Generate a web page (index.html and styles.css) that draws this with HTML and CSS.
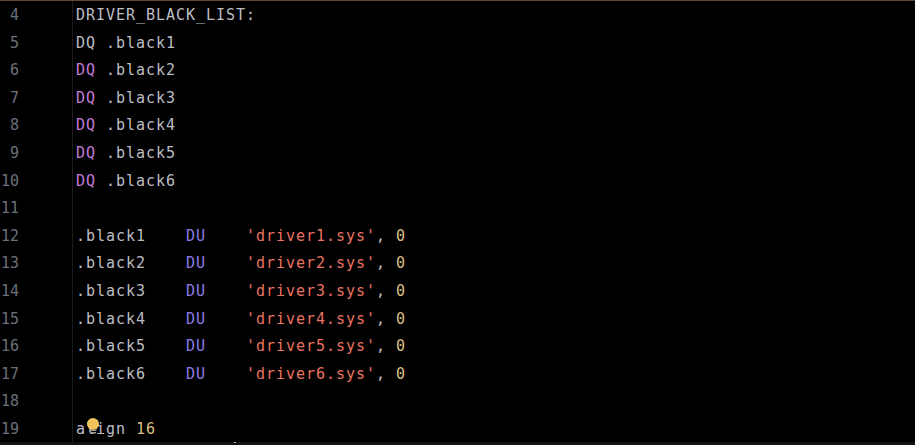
FILE: index.html
```html
<!DOCTYPE html>
<html>
<head>
<meta charset="utf-8">
<link rel="stylesheet" href="styles.css">
</head>
<body>
<div class="editor">
  <div class="gutter">
    <div class="ln">4</div><div class="ln">5</div><div class="ln">6</div><div class="ln">7</div>
    <div class="ln">8</div><div class="ln">9</div><div class="ln">10</div><div class="ln">11</div>
    <div class="ln">12</div><div class="ln">13</div><div class="ln">14</div><div class="ln">15</div>
    <div class="ln">16</div><div class="ln">17</div><div class="ln">18</div><div class="ln">19</div>
  </div>
  <div class="code">
    <div class="line">DRIVER_BLACK_LIST:</div>
    <div class="line">DQ .black1</div>
    <div class="line"><span class="kw">DQ</span> .black2</div>
    <div class="line"><span class="kw">DQ</span> .black3</div>
    <div class="line"><span class="kw">DQ</span> .black4</div>
    <div class="line"><span class="kw">DQ</span> .black5</div>
    <div class="line"><span class="kw">DQ</span> .black6</div>
    <div class="line"> </div>
    <div class="line">.black1    <span class="du">DU</span>    <span class="str">'driver1.sys'</span>, <span class="num">0</span></div>
    <div class="line">.black2    <span class="du">DU</span>    <span class="str">'driver2.sys'</span>, <span class="num">0</span></div>
    <div class="line">.black3    <span class="du">DU</span>    <span class="str">'driver3.sys'</span>, <span class="num">0</span></div>
    <div class="line">.black4    <span class="du">DU</span>    <span class="str">'driver4.sys'</span>, <span class="num">0</span></div>
    <div class="line">.black5    <span class="du">DU</span>    <span class="str">'driver5.sys'</span>, <span class="num">0</span></div>
    <div class="line">.black6    <span class="du">DU</span>    <span class="str">'driver6.sys'</span>, <span class="num">0</span></div>
    <div class="line"> </div>
    <div class="line bulb-line">align <span class="num">16</span><svg class="bulb" width="14" height="16" viewBox="0 0 14 16"><circle cx="7" cy="6" r="6" fill="#f2c35a"/><rect x="3.5" y="11.5" width="7" height="1.5" fill="#9a9a9a"/><rect x="4" y="14" width="6" height="1.5" fill="#9a9a9a"/></svg></div>
  </div>
</div>
<div class="status"><span class="dot"></span></div>
</body>
</html>
```
FILE: styles.css
```css
html, body {
  margin: 0;
  padding: 0;
  background: #000;
}
body {
  width: 915px;
  height: 445px;
  overflow: hidden;
  font-family: "DejaVu Sans Mono", "Liberation Mono", monospace;
  font-size: 15px;
}
.editor {
  height: 441px;
  border-top: 1px solid #5b4a2e;
  display: flex;
  overflow: hidden;
}
.gutter {
  width: 73px;
  border-right: 1px solid #1c1c1c;
  box-sizing: border-box;
  padding-right: 53px;
  padding-top: 1px;
  text-align: right;
  color: #6c707a;
}
.ln, .line {
  height: 27.6px;
  line-height: 27.6px;
  white-space: pre;
}
.code {
  padding-left: 3px;
  padding-top: 1px;
  color: #bcbec4;
  letter-spacing: 0.97px;
}
.kw { color: #c27cd6; }
.du { color: #8f7be8; }
.str { color: #ea7462; }
.num { color: #d8bf82; }
.bulb-line {
  position: relative;
}
.bulb {
  position: absolute;
  left: 10px;
  top: 2px;
}
.status {
  height: 3px;
  background: #121212;
  position: relative;
}
.dot {
  position: absolute;
  left: 234px;
  top: 0;
  width: 2px;
  height: 1px;
  background: #bbb;
}
```
